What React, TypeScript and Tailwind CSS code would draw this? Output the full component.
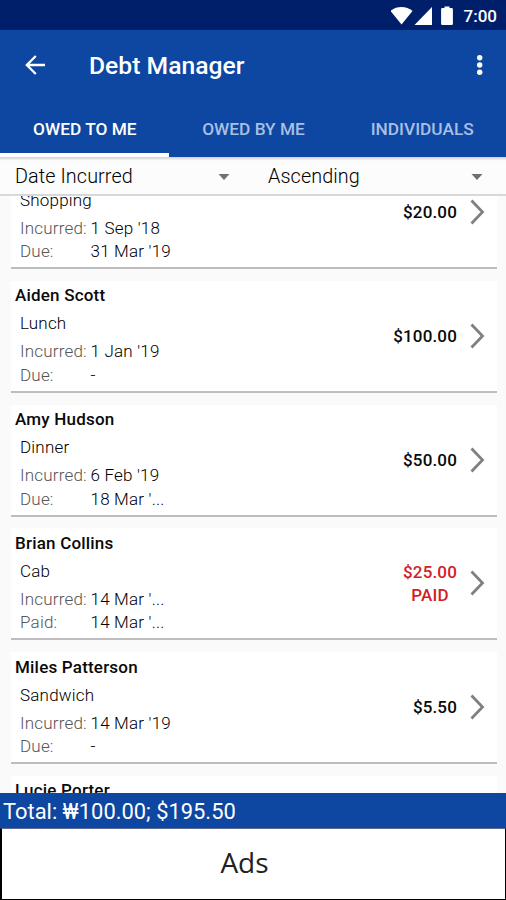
type Debt = {
  name?: string;
  item: string;
  incurred: string;
  label: 'Due:' | 'Paid:';
  date: string;
  amount: string;
  paid?: boolean;
};

const debts: Debt[] = [
  { item: 'Shopping', incurred: "1 Sep '18", label: 'Due:', date: "31 Mar '19", amount: '$20.00' },
  { name: 'Aiden Scott', item: 'Lunch', incurred: "1 Jan '19", label: 'Due:', date: '-', amount: '$100.00' },
  { name: 'Amy Hudson', item: 'Dinner', incurred: "6 Feb '19", label: 'Due:', date: "18 Mar '...", amount: '$50.00' },
  { name: 'Brian Collins', item: 'Cab', incurred: "14 Mar '...", label: 'Paid:', date: "14 Mar '...", amount: '$25.00', paid: true },
  { name: 'Miles Patterson', item: 'Sandwich', incurred: "14 Mar '19", label: 'Due:', date: '-', amount: '$5.50' },
];

function StatusBar() {
  return (
    <div className="flex h-[30px] shrink-0 items-center justify-end bg-[#001f6b] pr-[9px] text-white">
      <svg width="66" height="20" viewBox="0 0 66 20" className="mr-[7px] mt-px" fill="currentColor">
        <path d="M-0.5 5C5.5 -0.2 15.5 -0.2 21.5 5L10.5 18.5Z" />
        <path d="M41 1V19H23.5Z" />
        <path d="M53.5 0.5h5v1.6h2.2q1.2 0 1.2 1.2v14.5q0 1.2-1.2 1.2h-9.4q-1.2 0-1.2-1.2v-14.5q0-1.2 1.2-1.2H53.5Z" />
      </svg>
      <span className="pt-0.5 text-[17px] font-medium leading-none">7:00</span>
    </div>
  );
}

function Header() {
  return (
    <div className="h-[127px] shrink-0 bg-[#0d47a1] text-white">
      <div className="flex h-[71px] items-center pl-[25px] pr-[22px]">
        <svg width="21" height="20" viewBox="0 0 21 20" fill="none" stroke="currentColor" strokeWidth="2.3" className="-mt-0.5">
          <path d="M20 10H2M10.8 1L1.8 10l9 9" />
        </svg>
        <h1 className="ml-[43px] grow pt-px text-[24.7px] font-medium leading-none">Debt Manager</h1>
        <svg width="8" height="22" viewBox="0 0 8 22" fill="currentColor" className="-mt-0.5">
          <circle cx="3.7" cy="3.8" r="2.7" />
          <circle cx="3.7" cy="11" r="2.7" />
          <circle cx="3.7" cy="18.2" r="2.7" />
        </svg>
      </div>
      <div className="grid h-14 grid-cols-3 text-center text-[17.3px] font-medium leading-[56px] text-[#a9bfe3]">
        <div className="h-14 border-b-4 border-white pl-px text-white">OWED TO ME</div>
        <div className="pl-px">OWED BY ME</div>
        <div className="pl-px">INDIVIDUALS</div>
      </div>
    </div>
  );
}

function Picker({ value }: { value: string }) {
  return (
    <div className="flex w-[253px] items-center justify-between pl-[15px] pr-[23px]">
      <span className="pt-0.5 text-[19.8px] font-light leading-none tracking-[0.1px] text-black">{value}</span>
      <svg width="12" height="6" viewBox="0 0 12 6" className="mt-0.5 fill-[#707070]">
        <path d="M0.5 0h11L6 6Z" />
      </svg>
    </div>
  );
}

function DebtCard({ debt }: { debt: Debt }) {
  return (
    <div className="flex h-[112px] shrink-0 items-center border-b-2 border-[#bdbdbd] bg-white pl-1 pr-3">
      <div className="grow text-[17px] font-light leading-[23.5px] tracking-[0.2px] text-black">
        <div className="h-[26px] text-[17px] font-medium tracking-[0.2px] text-[#0a0a0a]">{debt.name}</div>
        <div className="mb-1 pl-[5px] pt-[2px]">{debt.item}</div>
        <div className="flex pl-[5px] pt-[0.5px]">
          <span className="w-[70.5px] text-[#555]">Incurred:</span>
          <span>{debt.incurred}</span>
        </div>
        <div className="flex pl-[5px]">
          <span className="w-[70.5px] text-[#555]">{debt.label}</span>
          <span>{debt.date}</span>
        </div>
      </div>
      <div className={`pt-px text-center text-[17px] font-medium leading-[23px] tracking-[0.15px] ${debt.paid ? 'text-[#d32027]' : 'text-[#0a0a0a]'}`}>
        <div>{debt.amount}</div>
        {debt.paid && <div>PAID</div>}
      </div>
      <svg width="15" height="26" viewBox="0 0 15 26" fill="none" stroke="#808080" strokeWidth="2.8" className="ml-[13px]">
        <path d="M1.5 1.5L12.5 13L1.5 24.5" />
      </svg>
    </div>
  );
}

export default function App() {
  return (
    <div className="flex h-[900px] w-[506px] flex-col overflow-hidden bg-[#fafafa] font-['Roboto',sans-serif]">
      <StatusBar />
      <Header />
      <div className="flex h-[39px] shrink-0 border-b-2 border-[#d8d8d8] bg-linear-to-b from-[#d0d0d0] via-[#fcfcfc] via-10% to-[#fcfcfc]">
        <Picker value="Date Incurred" />
        <Picker value="Ascending" />
      </div>
      <div className="h-[597px] shrink-0 overflow-hidden pl-[11px] pr-[9px]">
        <div className="-mt-[39px] flex flex-col gap-[11.75px]">
          {debts.map((debt) => (
            <DebtCard key={debt.item} debt={debt} />
          ))}
          <div className="h-[112px] bg-white pl-1 pt-[3px] text-[17px] font-medium leading-[23.5px] tracking-[0.2px] text-[#0a0a0a]">Lucie Porter</div>
        </div>
      </div>
      <div className="h-[35px] shrink-0 bg-[#0d47a1] pl-[3px] text-[21.9px] leading-[37px] text-white">Total: ₩100.00; $195.50</div>
      <div className="flex grow items-center justify-center border border-l-2 border-black border-t-[#5b6a94] bg-white pb-1 pr-[18px] font-['Open_Sans',sans-serif] text-[28px] text-[#222]">
        Ads
      </div>
    </div>
  );
}
